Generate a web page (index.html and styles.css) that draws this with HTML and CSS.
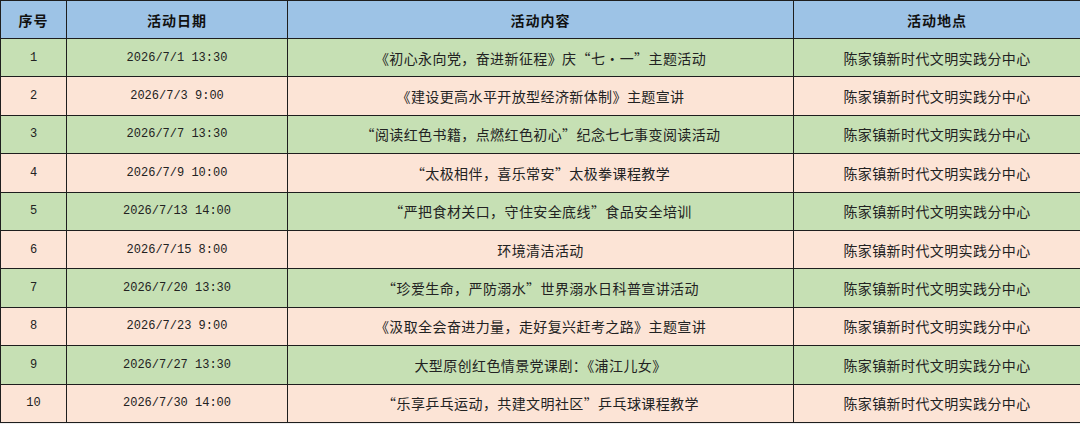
FILE: index.html
```html
<!DOCTYPE html>
<html lang="zh-CN">
<head>
<meta charset="utf-8">
<title>活动安排</title>
<link rel="stylesheet" href="styles.css">
</head>
<body>
<table class="schedule">
  <colgroup>
    <col class="c-no">
    <col class="c-date">
    <col class="c-content">
    <col class="c-place">
  </colgroup>
  <thead>
    <tr class="head">
      <th>序号</th>
      <th>活动日期</th>
      <th>活动内容</th>
      <th>活动地点</th>
    </tr>
  </thead>
  <tbody>
    <tr class="green"><td class="num">1</td><td class="num">2026/7/1 13:30</td><td>《初心永向党，奋进新征程》庆“七·一”主题活动</td><td>陈家镇新时代文明实践分中心</td></tr>
    <tr class="peach"><td class="num">2</td><td class="num">2026/7/3 9:00</td><td>《建设更高水平开放型经济新体制》主题宣讲</td><td>陈家镇新时代文明实践分中心</td></tr>
    <tr class="green"><td class="num">3</td><td class="num">2026/7/7 13:30</td><td>“阅读红色书籍，点燃红色初心”纪念七七事变阅读活动</td><td>陈家镇新时代文明实践分中心</td></tr>
    <tr class="peach"><td class="num">4</td><td class="num">2026/7/9 10:00</td><td>“太极相伴，喜乐常安”太极拳课程教学</td><td>陈家镇新时代文明实践分中心</td></tr>
    <tr class="green"><td class="num">5</td><td class="num">2026/7/13 14:00</td><td>“严把食材关口，守住安全底线”食品安全培训</td><td>陈家镇新时代文明实践分中心</td></tr>
    <tr class="peach"><td class="num">6</td><td class="num">2026/7/15 8:00</td><td>环境清洁活动</td><td>陈家镇新时代文明实践分中心</td></tr>
    <tr class="green"><td class="num">7</td><td class="num">2026/7/20 13:30</td><td>“珍爱生命，严防溺水”世界溺水日科普宣讲活动</td><td>陈家镇新时代文明实践分中心</td></tr>
    <tr class="peach"><td class="num">8</td><td class="num">2026/7/23 9:00</td><td>《汲取全会奋进力量，走好复兴赶考之路》主题宣讲</td><td>陈家镇新时代文明实践分中心</td></tr>
    <tr class="green"><td class="num">9</td><td class="num">2026/7/27 13:30</td><td>大型原创红色情景党课剧：《浦江儿女》</td><td>陈家镇新时代文明实践分中心</td></tr>
    <tr class="peach"><td class="num">10</td><td class="num">2026/7/30 14:00</td><td>“乐享乒乓运动，共建文明社区”乒乓球课程教学</td><td>陈家镇新时代文明实践分中心</td></tr>
  </tbody>
</table>
</body>
</html>
```

FILE: styles.css
```css
html, body {
  margin: 0;
  padding: 0;
  background: #efefef;
}

.schedule {
  width: 1080px;
  border-collapse: collapse;
  table-layout: fixed;
  font-family: "Noto Sans CJK SC", "Noto Sans", sans-serif;
  color: #222;
}

.c-no { width: 66px; }
.c-date { width: 221px; }
.c-content { width: 506px; }
.c-place { width: 287px; }

.schedule th,
.schedule td {
  border: 1px solid #1e1e1e;
  padding: 0;
  text-align: center;
  vertical-align: middle;
  white-space: nowrap;
  overflow: hidden;
}

.schedule th {
  height: 37px;
  font-size: 14px;
  font-weight: 700;
  letter-spacing: 1px;
  background: #9dc3e6;
  color: #111;
}

.schedule td {
  height: 37.4px;
  font-size: 14px;
  letter-spacing: 0.4px;
  line-height: 18px;
}

.schedule td.num {
  font-family: "Liberation Mono", "Noto Sans CJK SC", monospace;
  font-size: 12px;
  letter-spacing: 0;
}

.green td { background: #c6e0b4; }
.peach td { background: #fce4d6; }
```
